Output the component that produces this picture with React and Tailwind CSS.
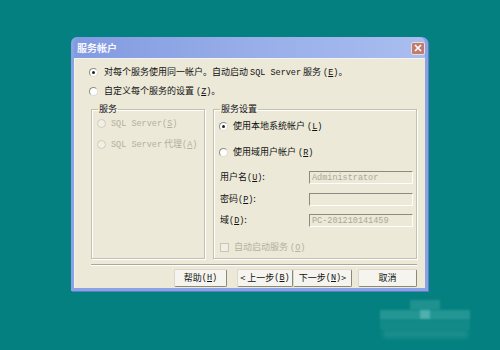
const cjk = "font-['Noto_Sans_CJK_SC','Noto_Sans',sans-serif]";
const mono = "font-['Liberation_Mono','Noto_Sans_CJK_SC',monospace] text-[8.5px]";

function Radio({ checked, disabled }) {
  return (
    <span
      className={
        "flex h-[9px] w-[9px] shrink-0 items-center justify-center rounded-full border " +
        (disabled
          ? "border-[#cfccbe] bg-[#f1efe6]"
          : "border-[#8f8d82] border-b-[#dedbd0] border-r-[#dedbd0] bg-white")
      }
    >
      {checked && <span className="h-[3px] w-[3px] rounded-full bg-[#222]" />}
    </span>
  );
}

function Key({ k }) {
  return (
    <span className={mono}>
      (<span className="underline">{k}</span>)
    </span>
  );
}

function Field({ label, value }) {
  return (
    <div className="flex h-[13px] items-center">
      <span className="w-[89px] shrink-0">{label}</span>
      <div className="flex h-[13px] w-[104px] items-center border border-[#8d8b80] border-b-[#fdfdfb] border-r-[#fdfdfb] bg-[#ece9d8] pl-[2px] text-[#aca899]">
        <span className={mono}>{value}</span>
      </div>
    </div>
  );
}

function Btn({ w, children }) {
  return (
    <div
      className={
        "flex h-[18px] items-center justify-center rounded-[2px] border border-[#dcd9cb] border-b-[#8a887c] border-r-[#8a887c] bg-[#f5f4ee] " +
        w
      }
    >
      {children}
    </div>
  );
}

export default function App() {
  return (
    <div className={"relative h-[350px] w-[500px] overflow-hidden bg-[#048080] pl-[71px] pt-[37px] text-[9px] leading-[12px] text-[#111] " + cjk}>
      {/* dialog */}
      <div className="flex h-[254px] w-[357px] flex-col rounded-t-[6px] bg-[#8ba3e2] px-[3px] pb-[3px] shadow-[1px_1px_0_#5c7bc9]">
        {/* title bar */}
        <div className="flex h-[21px] shrink-0 items-center justify-between rounded-t-[6px] bg-gradient-to-r from-[#829ae0] via-[#98aee9] to-[#a9bdf0] pl-[3px]">
          <span className="text-[10px] font-bold text-[#f7f8ff]">服务帐户</span>
          <div className="mt-[1px] flex h-[13px] w-[14px] items-center justify-center rounded-[2px] border border-[#e8dcdc] bg-[#bf7d72]">
            <svg width="8" height="8" viewBox="0 0 8 8">
              <path d="M1 1 L7 7 M7 1 L1 7" stroke="#fff" strokeWidth="1.6" />
            </svg>
          </div>
        </div>

        {/* body */}
        <div className="flex flex-1 flex-col border-l border-t border-[#f4f3ee] bg-[#ece9d8] pl-[14px] pr-[8px] pt-[7px]">
          <div className="flex h-[12px] items-center gap-[6px]">
            <Radio checked />
            <span>
              对每个服务使用同一帐户。自动启动 <span className={mono}>SQL Server</span> 服务 <Key k="E" />。
            </span>
          </div>
          <div className="mt-[7px] flex h-[12px] items-center gap-[6px]">
            <Radio />
            <span>
              自定义每个服务的设置 <Key k="Z" />。
            </span>
          </div>

          <div className="ml-[2px] mt-[6px] flex gap-[8px]">
            <fieldset className="h-[156px] w-[114px] border border-[#c3c0b1] pl-[5px] shadow-[inset_1px_1px_0_#fff,1px_1px_0_#fff]">
              <legend className="ml-[1px] px-[1px]">服务</legend>
              <div className="mt-[2px] flex h-[12px] items-center gap-[5px] text-[#b3b0a2]">
                <Radio disabled />
                <span>
                  <span className={mono}>SQL Server</span>
                  <Key k="S" />
                </span>
              </div>
              <div className="mt-[9px] flex h-[12px] items-center gap-[5px] text-[#b3b0a2]">
                <Radio disabled />
                <span>
                  <span className={mono}>SQL Server</span> 代理<Key k="A" />
                </span>
              </div>
            </fieldset>

            <fieldset className="h-[156px] w-[204px] border border-[#c3c0b1] pl-[5px] shadow-[inset_1px_1px_0_#fff,1px_1px_0_#fff]">
              <legend className="ml-[1px] px-[1px]">服务设置</legend>
              <div className="mt-[5px] flex h-[12px] items-center gap-[5px]">
                <Radio checked />
                <span>
                  使用本地系统帐户 <Key k="L" />
                </span>
              </div>
              <div className="mt-[14px] flex h-[12px] items-center gap-[5px]">
                <Radio />
                <span>
                  使用域用户帐户 <Key k="R" />
                </span>
              </div>
              <div className="mt-[13px] pl-[1px]">
                <Field label={<>用户名<Key k="U" />:</>} value="Administrator" />
              </div>
              <div className="mt-[9px] pl-[1px]">
                <Field label={<>密码<Key k="P" />:</>} value="" />
              </div>
              <div className="mt-[8px] pl-[1px]">
                <Field label={<>域<Key k="D" />:</>} value="PC-201210141459" />
              </div>
              <div className="mt-[14px] flex h-[12px] items-center gap-[5px] pl-[1px] text-[#b3b0a2]">
                <span className="h-[9px] w-[9px] shrink-0 border border-[#c9c6b7] bg-[#f0eee5]" />
                <span>
                  自动启动服务 <Key k="O" />
                </span>
              </div>
            </fieldset>
          </div>

          <div className="ml-[2px] mt-[5px] h-[2px] w-[326px] border-b border-t border-b-white border-t-[#aca899]" />

          <div className="mt-[3px] flex justify-end">
            <Btn w="w-[53px]">
              帮助 <Key k="H" />
            </Btn>
            <div className="w-[10px]" />
            <Btn w="w-[56px]">
              &lt; 上一步 <Key k="B" />
            </Btn>
            <Btn w="w-[59px]">
              下一步 <Key k="N" /> &gt;
            </Btn>
            <div className="w-[6px]" />
            <Btn w="w-[59px]">取消</Btn>
          </div>
        </div>
      </div>

      {/* pixelated watermark */}
      <div className="absolute left-[410px] top-[300px] h-[10px] w-[30px] bg-[#1f918f] blur-[1px]" />
      <div className="absolute left-[380px] top-[310px] h-[10px] w-[90px] bg-[#239593] blur-[1px]" />
      <div className="absolute left-[420px] top-[310px] h-[9px] w-[10px] bg-[#4fb0ad] blur-[1px]" />
      <div className="absolute left-[380px] top-[320px] h-[10px] w-[90px] bg-[#138a88] blur-[1px]" />
      <div className="absolute left-[383px] top-[330px] h-[8px] w-[85px] bg-[#1a8e8c] blur-[2px]" />
    </div>
  );
}
